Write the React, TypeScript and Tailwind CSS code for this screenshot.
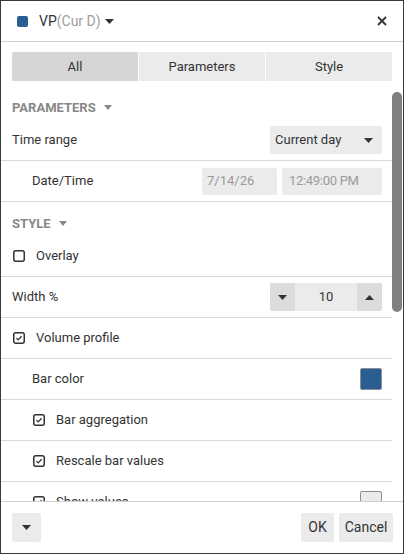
import React from "react";

const Caret = ({ up = false, className = "" }: { up?: boolean; className?: string }) => (
  <svg width="9" height="5" viewBox="0 0 9 5" className={className}>
    {up ? <polygon points="0,5 9,5 4.5,0" fill="#333" /> : <polygon points="0,0 9,0 4.5,5" fill="#333" />}
  </svg>
);

const SmallCaret = () => (
  <svg width="8" height="5" viewBox="0 0 8 5">
    <polygon points="0,0 8,0 4,5" fill="#888" />
  </svg>
);

const Check = ({ checked }: { checked: boolean }) => (
  <svg width="12" height="12" viewBox="0 0 12 12" className="shrink-0">
    <rect x="0.75" y="0.75" width="10.5" height="10.5" rx="2" fill="none" stroke="#333" strokeWidth="1.5" />
    {checked && <path d="M3.4 6.1 L5.2 7.9 L8.6 4.3" fill="none" stroke="#333" strokeWidth="1.3" />}
  </svg>
);

const Row = ({ children, indent = false }: { children: React.ReactNode; indent?: boolean }) => (
  <div
    className={`h-[41px] shrink-0 border-b border-[#d9d9d9] flex items-center pr-[10px] ${
      indent ? "pl-[31px]" : "pl-[11px]"
    }`}
  >
    {children}
  </div>
);

const SectionHeader = ({ title }: { title: string }) => (
  <div className="h-[34px] shrink-0 pl-[11px] pt-[12px] flex items-start">
    <div className="flex items-center gap-[8px] h-[19px]">
      <span className="text-[13px] font-bold text-[#888] leading-[19px]">{title}</span>
      <SmallCaret />
    </div>
  </div>
);

export default function App() {
  return (
    <div
      className="w-[404px] h-[554px] border border-[#3a3a3a] bg-white flex flex-col text-[#333] text-[13px] overflow-hidden"
      style={{ fontFamily: "Roboto, 'Liberation Sans', Arial, sans-serif" }}
    >
      {/* Header */}
      <div className="h-[41px] shrink-0 border-b border-[#d0d0d0] flex items-center pl-[16px] pr-[16px]">
        <div className="w-[11px] h-[11px] rounded-[2px] bg-[#2a5e93]" />
        <span className="ml-[11px] text-[14px] leading-[20px]">VP</span>
        <span className="text-[14px] leading-[20px] text-[#a0a0a0]">(Cur D)</span>
        <Caret className="ml-[4px]" />
        <div className="flex-1" />
        <svg width="10" height="10" viewBox="0 0 10 10">
          <path d="M1 1 L9 9 M9 1 L1 9" stroke="#333" strokeWidth="1.8" />
        </svg>
      </div>

      {/* Tabs */}
      <div className="shrink-0 pt-[10px] px-[11px] pb-[5px]">
        <div className="flex gap-[1px] h-[29px]">
          <div className="flex-1 rounded-l-[2px] bg-[#d6d6d6] flex items-center justify-center">All</div>
          <div className="flex-1 bg-[#ebebeb] flex items-center justify-center">Parameters</div>
          <div className="flex-1 rounded-r-[2px] bg-[#ebebeb] flex items-center justify-center">Style</div>
        </div>
      </div>

      {/* Content */}
      <div className="flex-1 min-h-0 flex">
        <div className="flex-1 min-w-0 overflow-hidden flex flex-col">
          <SectionHeader title="PARAMETERS" />
          <Row>
            <span>Time range</span>
            <div className="flex-1" />
            <div className="w-[112px] h-[28px] rounded-[2px] bg-[#ebebeb] flex items-center pl-[5px] pr-[9px]">
              <span className="flex-1">Current day</span>
              <Caret />
            </div>
          </Row>
          <Row indent>
            <span>Date/Time</span>
            <div className="flex-1" />
            <div className="w-[75px] h-[27px] rounded-[2px] bg-[#ebebeb] flex items-center pl-[5px] text-[#9a9a9a]">
              7/14/26
            </div>
            <div className="ml-[5px] w-[100px] h-[27px] rounded-[2px] bg-[#ebebeb] flex items-center pl-[7px] text-[#9a9a9a] tracking-[-0.3px]">
              12:49:00 PM
            </div>
          </Row>
          <SectionHeader title="STYLE" />
          <Row>
            <div className="pl-[1px] flex items-center">
              <Check checked={false} />
            </div>
            <span className="ml-[11px]">Overlay</span>
          </Row>
          <Row>
            <span>Width %</span>
            <div className="flex-1" />
            <div className="w-[112px] h-[28px] rounded-[2px] bg-[#ebebeb] flex items-center">
              <div className="w-[25px] h-full rounded-l-[2px] bg-[#dcdcdc] flex items-center justify-center">
                <Caret />
              </div>
              <div className="flex-1 text-center">10</div>
              <div className="w-[25px] h-full rounded-r-[2px] bg-[#dcdcdc] flex items-center justify-center">
                <Caret up />
              </div>
            </div>
          </Row>
          <Row>
            <div className="pl-[1px] flex items-center">
              <Check checked />
            </div>
            <span className="ml-[11px]">Volume profile</span>
          </Row>
          <Row indent>
            <span>Bar color</span>
            <div className="flex-1" />
            <div className="w-[22px] h-[22px] rounded-[2px] bg-[#2a5e93] border border-[#8a8f96]" />
          </Row>
          <Row indent>
            <div className="pl-[1px] flex items-center">
              <Check checked />
            </div>
            <span className="ml-[11px]">Bar aggregation</span>
          </Row>
          <Row indent>
            <div className="pl-[1px] flex items-center">
              <Check checked />
            </div>
            <span className="ml-[11px]">Rescale bar values</span>
          </Row>
          <Row indent>
            <div className="pl-[1px] flex items-center">
              <Check checked />
            </div>
            <span className="ml-[11px]">Show values</span>
            <div className="flex-1" />
            <div className="w-[22px] h-[22px] rounded-[2px] bg-[#ebebeb] border border-[#8a8f96]" />
          </Row>
        </div>
        <div className="w-[11px] shrink-0 pt-[6px] pr-[1px]">
          <div className="w-[10px] h-[220px] rounded-full bg-[#808080]" />
        </div>
      </div>

      {/* Footer */}
      <div className="h-[52px] shrink-0 border-t border-[#d0d0d0] flex items-start pt-[11px] pl-[11px] pr-[10px]">
        <div className="w-[29px] h-[29px] rounded-[2px] bg-[#ebebeb] flex items-center justify-center">
          <Caret />
        </div>
        <div className="flex-1" />
        <div className="w-[33px] h-[29px] rounded-[2px] bg-[#ebebeb] flex items-center justify-center text-[14px]">
          OK
        </div>
        <div className="ml-[5px] w-[54px] h-[29px] rounded-[2px] bg-[#ebebeb] flex items-center justify-center text-[14px]">
          Cancel
        </div>
      </div>
    </div>
  );
}
